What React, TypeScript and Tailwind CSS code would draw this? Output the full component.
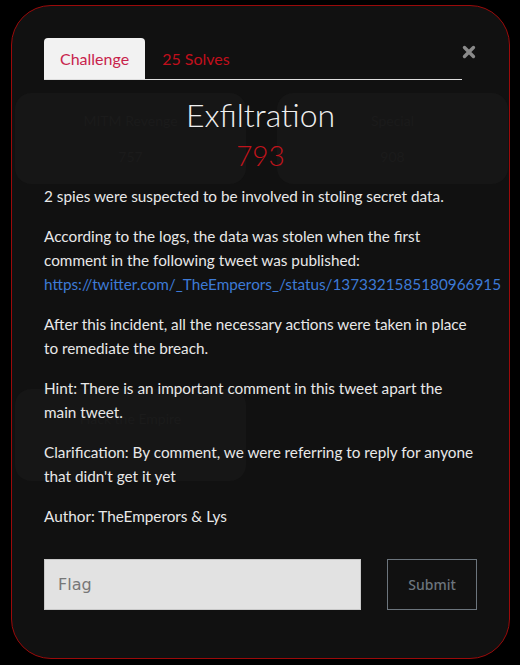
import React from 'react';

const body = { fontFamily: 'Lato, "Noto Sans", sans-serif' };

const App: React.FC = () => {
  return (
    <div className="h-[665px] w-[520px] bg-black pt-[5px] pl-[11px]" style={body}>
      <div className="relative h-[654px] w-[499px] overflow-hidden rounded-[40px] border border-[#9b0a0a] bg-[#111111]">
        {/* cards of the page behind, showing through */}
        <div className="absolute left-[3px] top-[87px] flex h-[91px] w-[231px] flex-col items-center rounded-[16px] bg-[#161616] pt-[17px] text-[#1b1b1b]">
          <span className="text-[14px]">MITM Revenge</span>
          <span className="mt-[15px] text-[14px]">757</span>
        </div>
        <div className="absolute left-[265px] top-[87px] flex h-[91px] w-[231px] flex-col items-center rounded-[16px] bg-[#161616] pt-[17px] text-[#1b1b1b]">
          <span className="text-[14px]">Special</span>
          <span className="mt-[15px] text-[14px]">908</span>
        </div>
        <div className="absolute left-[3px] top-[383px] flex h-[92px] w-[231px] flex-col items-center rounded-[16px] bg-[#161616] pt-[19px] text-[#1b1b1b]">
          <span className="text-[14px]">Hack the Empire</span>
        </div>

        <div className="relative z-10 px-[32px] pt-[32px]">
          <div className="flex items-end justify-between">
            <div className="flex w-[420px] items-end border-b border-[#dedede]">
              <div className="flex h-[41px] items-center rounded-t-[4px] bg-[#f2f2f2] px-[16px] text-[16px] text-[#c8234c]">
                Challenge
              </div>
              <div className="flex h-[41px] items-center px-[17px] text-[16px] text-[#c10f1c]">25 Solves</div>
            </div>
            <svg width="14" height="14" viewBox="0 0 14 14" className="mb-[21px] mr-[1px]">
              <path d="M2.5 2.5 L11.5 11.5 M11.5 2.5 L2.5 11.5" stroke="#8a8a8a" strokeWidth="3.4" strokeLinecap="round" />
            </svg>
          </div>

          <h1 className="mt-[16px] text-center text-[32px] font-light leading-[38px] text-[#f0f0f0]">Exfiltration</h1>
          <div className="mt-[3px] text-center text-[28px] font-light leading-[36px] text-[#c0141c]">793</div>

          <div className="mt-[11px] text-[15.3px] leading-[24px] text-[#e8e8e8]">
            <p>2 spies were suspected to be involved in stoling secret data.</p>
            <p className="mt-[16px]">
              According to the logs, the data was stolen when the first comment in the following tweet was published:
              <br />
              <span className="whitespace-nowrap text-[#3d7ad6]">https://twitter.com/_TheEmperors_/status/1373321585180966915</span>
            </p>
            <p className="mt-[16px]">After this incident, all the necessary actions were taken in place to remediate the breach.</p>
            <p className="mt-[16px]">Hint: There is an important comment in this tweet apart the main tweet.</p>
            <p className="mt-[16px]">Clarification: By comment, we were referring to reply for anyone that didn't get it yet</p>
            <p className="mt-[16px]">Author: TheEmperors &amp; Lys</p>
          </div>

          <div className="mt-[31px] flex items-center justify-between">
            <input
              placeholder="Flag"
              className="h-[51px] w-[317px] border border-[#c8c8c8] bg-[#e2e2e2] px-[13px] text-[16px] text-[#333] placeholder:text-[#777] outline-none"
              style={{ fontFamily: '"DejaVu Sans", sans-serif' }}
            />
            <button
              className="h-[51px] w-[90px] border border-[#6c757d] text-[14px] font-medium text-[#6c757d]"
              style={{ fontFamily: '"Noto Sans", sans-serif' }}
            >
              Submit
            </button>
          </div>
        </div>
      </div>
    </div>
  );
};

export default App;
